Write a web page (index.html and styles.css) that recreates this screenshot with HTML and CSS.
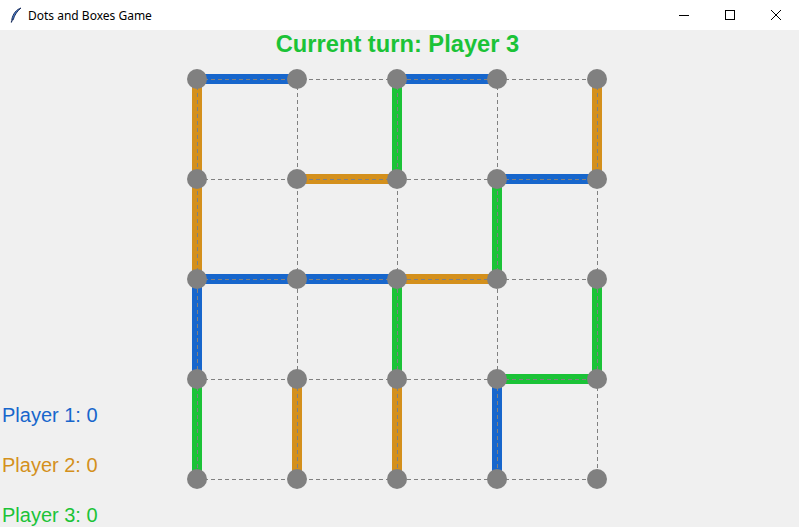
FILE: index.html
```html
<!DOCTYPE html>
<html>
<head>
<meta charset="utf-8">
<title>Dots and Boxes Game</title>
<link rel="stylesheet" href="styles.css">
</head>
<body>
<div class="window">
  <header class="titlebar">
    <div class="app">
      <svg class="feather" width="16" height="16" viewBox="0 0 16 16">
        <path d="M13 1 C8.5 2.5 5 6.5 3.8 12.5 L5.2 12.8 C6.5 7.5 9.5 4 13 1 Z" fill="#4f86d6" stroke="#1b2f5e" stroke-width="1"/>
        <path d="M4.4 12.5 L3.2 15.5" stroke="#1b2f5e" stroke-width="1.2"/>
      </svg>
      <span class="app-title">Dots and Boxes Game</span>
    </div>
    <div class="controls">
      <div class="ctl">
        <svg width="10" height="10" viewBox="0 0 10 10"><path d="M0 5.5 H10" stroke="#000" stroke-width="1"/></svg>
      </div>
      <div class="ctl">
        <svg width="10" height="10" viewBox="0 0 10 10"><rect x="0.5" y="0.5" width="9" height="9" fill="none" stroke="#000" stroke-width="1"/></svg>
      </div>
      <div class="ctl">
        <svg width="10" height="10" viewBox="0 0 10 10"><path d="M0 0 L10 10 M10 0 L0 10" stroke="#000" stroke-width="1"/></svg>
      </div>
    </div>
  </header>
  <main class="game">
    <svg class="board" width="799" height="497" viewBox="0 0 799 497">
      <g class="moves" stroke-width="10" stroke-linecap="butt">
        <line x1="197" y1="49" x2="297" y2="49" stroke="#1766cc"/>
        <line x1="397" y1="49" x2="497" y2="49" stroke="#1766cc"/>
        <line x1="297" y1="149" x2="397" y2="149" stroke="#d4901c"/>
        <line x1="497" y1="149" x2="597" y2="149" stroke="#1766cc"/>
        <line x1="197" y1="249" x2="297" y2="249" stroke="#1766cc"/>
        <line x1="297" y1="249" x2="397" y2="249" stroke="#1766cc"/>
        <line x1="397" y1="249" x2="497" y2="249" stroke="#d4901c"/>
        <line x1="497" y1="349" x2="597" y2="349" stroke="#1bc337"/>
        <line x1="197" y1="49" x2="197" y2="149" stroke="#d4901c"/>
        <line x1="197" y1="149" x2="197" y2="249" stroke="#d4901c"/>
        <line x1="197" y1="249" x2="197" y2="349" stroke="#1766cc"/>
        <line x1="197" y1="349" x2="197" y2="449" stroke="#1bc337"/>
        <line x1="297" y1="349" x2="297" y2="449" stroke="#d4901c"/>
        <line x1="397" y1="49" x2="397" y2="149" stroke="#1bc337"/>
        <line x1="397" y1="249" x2="397" y2="349" stroke="#1bc337"/>
        <line x1="397" y1="349" x2="397" y2="449" stroke="#d4901c"/>
        <line x1="497" y1="149" x2="497" y2="249" stroke="#1bc337"/>
        <line x1="497" y1="349" x2="497" y2="449" stroke="#1766cc"/>
        <line x1="597" y1="49" x2="597" y2="149" stroke="#d4901c"/>
        <line x1="597" y1="249" x2="597" y2="349" stroke="#1bc337"/>
      </g>
      <g class="grid" stroke="#808080" stroke-width="1" stroke-dasharray="4 3">
        <line x1="197" y1="49.5" x2="597" y2="49.5"/>
        <line x1="197" y1="149.5" x2="597" y2="149.5"/>
        <line x1="197" y1="249.5" x2="597" y2="249.5"/>
        <line x1="197" y1="349.5" x2="597" y2="349.5"/>
        <line x1="197" y1="449.5" x2="597" y2="449.5"/>
        <line x1="197.5" y1="49" x2="197.5" y2="449"/>
        <line x1="297.5" y1="49" x2="297.5" y2="449"/>
        <line x1="397.5" y1="49" x2="397.5" y2="449"/>
        <line x1="497.5" y1="49" x2="497.5" y2="449"/>
        <line x1="597.5" y1="49" x2="597.5" y2="449"/>
      </g>
      <g class="dots" fill="#808080">
        <circle cx="197" cy="49" r="10"/><circle cx="297" cy="49" r="10"/><circle cx="397" cy="49" r="10"/><circle cx="497" cy="49" r="10"/><circle cx="597" cy="49" r="10"/>
        <circle cx="197" cy="149" r="10"/><circle cx="297" cy="149" r="10"/><circle cx="397" cy="149" r="10"/><circle cx="497" cy="149" r="10"/><circle cx="597" cy="149" r="10"/>
        <circle cx="197" cy="249" r="10"/><circle cx="297" cy="249" r="10"/><circle cx="397" cy="249" r="10"/><circle cx="497" cy="249" r="10"/><circle cx="597" cy="249" r="10"/>
        <circle cx="197" cy="349" r="10"/><circle cx="297" cy="349" r="10"/><circle cx="397" cy="349" r="10"/><circle cx="497" cy="349" r="10"/><circle cx="597" cy="349" r="10"/>
        <circle cx="197" cy="449" r="10"/><circle cx="297" cy="449" r="10"/><circle cx="397" cy="449" r="10"/><circle cx="497" cy="449" r="10"/><circle cx="597" cy="449" r="10"/>
      </g>
    </svg>
    <h1 class="turn">Current turn: Player 3</h1>
    <div class="scores">
      <div class="score p1">Player 1: 0</div>
      <div class="score p2">Player 2: 0</div>
      <div class="score p3">Player 3: 0</div>
    </div>
  </main>
</div>
</body>
</html>
```

FILE: styles.css
```css
html, body {
  margin: 0;
  padding: 0;
}
body {
  width: 799px;
  height: 527px;
  overflow: hidden;
  background: #f0f0f0;
  font-family: "Liberation Sans", Arial, sans-serif;
}
.window {
  display: flex;
  flex-direction: column;
  height: 527px;
}
.titlebar {
  height: 30px;
  flex: 0 0 30px;
  background: #ffffff;
  display: flex;
  align-items: center;
  justify-content: space-between;
}
.app {
  display: flex;
  align-items: center;
  padding-left: 8px;
  gap: 4px;
}
.feather {
  display: block;
}
.app-title {
  font-family: "Noto Sans", "Liberation Sans", sans-serif;
  font-size: 12px;
  color: #000;
}
.controls {
  display: flex;
  height: 30px;
}
.ctl {
  width: 46px;
  height: 30px;
  display: flex;
  align-items: center;
  justify-content: center;
}
.ctl svg {
  display: block;
}
.game {
  flex: 1;
  display: grid;
  grid-template: 1fr / 1fr;
}
.game > * {
  grid-area: 1 / 1;
}
.board {
  display: block;
}
.turn {
  margin: 0 4px 0 0;
  align-self: start;
  justify-self: center;
  font-size: 23.7px;
  line-height: 28px;
  font-weight: bold;
  color: #1bc337;
}
.scores {
  align-self: end;
  justify-self: start;
  display: flex;
  flex-direction: column;
  gap: 27px;
  padding-left: 2px;
  padding-bottom: 0;
}
.score {
  font-size: 20px;
  line-height: 23px;
}
.p1 { color: #1766cc; }
.p2 { color: #d4901c; }
.p3 { color: #1bc337; }
```
